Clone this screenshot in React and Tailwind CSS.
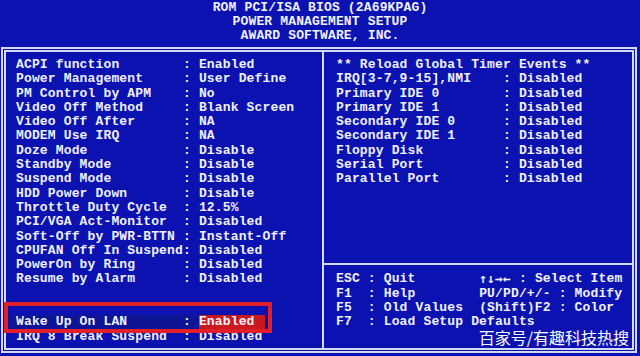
const leftRows = [
  ["ACPI function", "Enabled"],
  ["Power Management", "User Define"],
  ["PM Control by APM", "No"],
  ["Video Off Method", "Blank Screen"],
  ["Video Off After", "NA"],
  ["MODEM Use IRQ", "NA"],
  ["Doze Mode", "Disable"],
  ["Standby Mode", "Disable"],
  ["Suspend Mode", "Disable"],
  ["HDD Power Down", "Disable"],
  ["Throttle Duty Cycle", "12.5%"],
  ["PCI/VGA Act-Monitor", "Disabled"],
  ["Soft-Off by PWR-BTTN", "Instant-Off"],
  ["CPUFAN Off In Suspend", "Disabled"],
  ["PowerOn by Ring", "Disabled"],
  ["Resume by Alarm", "Disabled"],
];

const timerRows = [
  "IRQ[3-7,9-15],NMI",
  "Primary IDE 0",
  "Primary IDE 1",
  "Secondary IDE 0",
  "Secondary IDE 1",
  "Floppy Disk",
  "Serial Port",
  "Parallel Port",
];

const keys = [
  ["ESC", "Quit", null],
  ["F1", "Help", "PU/PD/+/- : Modify"],
  ["F5", "Old Values", "(Shift)F2 : Color"],
  ["F7", "Load Setup Defaults", ""],
];

const mono = "font-['Liberation_Mono','DejaVu_Sans_Mono',monospace] font-bold";

function Row({ children, className = "" }) {
  return (
    <div className={`h-[14.3px] leading-[14.3px] whitespace-pre overflow-hidden ${className}`}>{children}</div>
  );
}

function item(label, value) {
  return label.padEnd(21) + ": " + value;
}

export default function App() {
  return (
    <div className={`relative w-[640px] h-[356px] overflow-hidden bg-[#0b12b0] text-[#f2f2ff] text-[13px] tracking-[0.15px] ${mono}`}>
      {/* title */}
      <div className="h-[47px] pt-[0.5px] flex flex-col items-center">
        <Row>ROM PCI/ISA BIOS (2A69KPAG)</Row>
        <Row>POWER MANAGEMENT SETUP</Row>
        <Row>AWARD SOFTWARE, INC.</Row>
      </div>

      {/* main frame */}
      <div className="ml-[1px] w-[636px] h-[306px] border-[5px] border-double border-[#d6daf2] flex">
        <div className="w-[316px] pl-[10px] pt-[6px]">
          {leftRows.map(([l, v]) => (
            <Row key={l}>{item(l, v)}</Row>
          ))}
          <Row> </Row>
          <Row> </Row>
          <Row className="-ml-[6px] pl-[6px] w-[258px] bg-[#0d1496]">
            {"Wake Up On LAN".padEnd(21) + ": "}
            <span className="inline-block w-[66px] bg-[#c81a1e]">Enabled</span>
          </Row>
          <Row>{item("IRQ 8 Break Suspend", "Disabled")}</Row>
        </div>

        <div className="w-[2px] bg-[#d6daf2]" />

        <div className="flex-1 flex flex-col pt-[6px]">
          <Row className="pl-[12px]">** Reload Global Timer Events **</Row>
          {timerRows.map((l) => (
            <Row key={l} className="pl-[12px]">{item(l, "Disabled")}</Row>
          ))}
          <div className="h-[76px]" />
          <div className="h-[2px] bg-[#d6daf2]" />
          <div className="h-[7.8px]" />
          {keys.map(([k, a, b]) => (
            <Row key={k} className="pl-[12px]">
              {(k.padEnd(4) + ": " + a).padEnd(18)}
              {b === null ? (
                <>
                  <span className="inline-block align-top h-[14.3px] leading-[14.3px] font-['DejaVu_Sans_Mono',monospace]">↑↓→←</span>
                  {" : Select Item"}
                </>
              ) : (
                b
              )}
            </Row>
          ))}
        </div>
      </div>

      {/* selection marker */}
      <div className="absolute left-[4px] top-[302px] w-[268px] h-[31px] border-4 border-[#e3202a]" />

      {/* watermark */}
      <div className="absolute right-[11px] top-[327px] text-[16px] leading-[20px] tracking-normal font-normal text-white font-['Noto_Sans_CJK_SC',sans-serif]">
        百家号/有趣科技热搜
      </div>
    </div>
  );
}
